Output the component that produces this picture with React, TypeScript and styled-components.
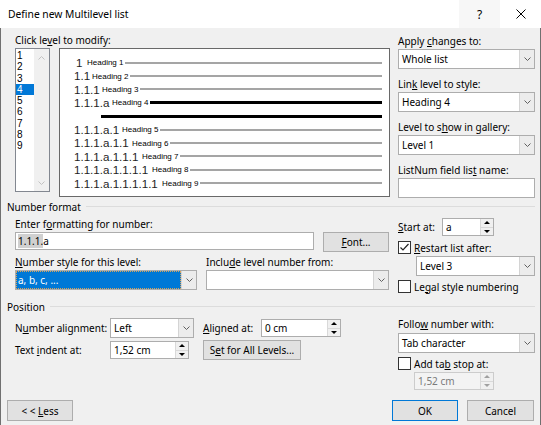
import React from 'react';
import styled, { createGlobalStyle } from 'styled-components';

const GlobalStyle = createGlobalStyle`
  html, body {
    margin: 0;
    padding: 0;
    background: #f0f0f0;
  }
  body {
    font-family: "Segoe UI", "Noto Sans", sans-serif;
    font-size: 10px;
    color: #000;
  }
  * {
    box-sizing: border-box;
  }
`;

const Window = styled('div')`
  width: 541px;
  height: 425px;
  display: flex;
  flex-direction: column;
  overflow: hidden;
  background: #f0f0f0;
`;

const TitleBar = styled('div')`
  flex: none;
  height: 28px;
  display: flex;
  align-items: center;
  padding-left: 8px;
  background: #fff;
  font-size: 10.3px;
`;

const Title = styled('div')`
  flex: 1;
`;

const TitleButton = styled('div')<{ $hover?: boolean }>`
  width: 41px;
  height: 28px;
  display: flex;
  align-items: center;
  justify-content: center;
  background: ${p => (p.$hover ? '#f7f7f7' : '#fff')};
  font-size: 12px;
`;

const Body = styled('div')`
  flex: 1;
  display: flex;
  flex-direction: column;
  padding: 5px 5px 0 6px;
  border-left: 1px solid #707070;
  border-right: 1px solid #707070;
`;

const Section = styled('div')`
  display: grid;
  grid-template-columns: 383px 137px;
  column-gap: 8px;
`;

const LeftArea = styled('div')`
  padding-left: 8px;
  display: flex;
  flex-direction: column;
`;

const RightColumn = styled('div')`
  display: flex;
  flex-direction: column;
`;

const Label = styled('div')<{ $top?: number; $h?: number }>`
  height: ${p => p.$h ?? 16}px;
  line-height: ${p => p.$h ?? 16}px;
  white-space: nowrap;
  margin-top: ${p => p.$top ?? 0}px;
`;

const LevelRow = styled('div')`
  display: flex;
  align-items: flex-start;
`;

const ListBox = styled('div')`
  width: 35px;
  height: 144px;
  display: flex;
  background: #fff;
  border: 1px solid #828790;
`;

const ListItems = styled('div')`
  flex: 1;
  padding-top: 1px;
`;

const ListItem = styled('div')<{ $selected?: boolean }>`
  height: 11.3px;
  line-height: 11.3px;
  padding-left: 1px;
  font-family: "Liberation Sans", Arial, sans-serif;
  font-size: 10px;
  background: ${p => (p.$selected ? '#0078d7' : 'transparent')};
  color: ${p => (p.$selected ? '#fff' : '#000')};
`;

const ScrollBar = styled('div')`
  width: 15px;
  display: flex;
  flex-direction: column;
  justify-content: space-between;
  align-items: center;
  padding: 7px 0 6px;
  background: #f0f0f0;
`;

const Preview = styled('div')`
  width: 331px;
  height: 149px;
  margin-left: 9px;
  padding: 7px 7px 0 14px;
  background: #fff;
  border: 1px solid #696969;
`;

const PreviewRow = styled('div')`
  height: 13.4px;
  display: flex;
  align-items: center;
  white-space: nowrap;
`;

const NumberText = styled('span')<{ $w: number; $pad?: number }>`
  display: inline-block;
  width: ${p => p.$w}px;
  padding-left: ${p => p.$pad ?? 0}px;
  font-family: "Liberation Sans", Arial, sans-serif;
  font-size: 11.6px;
  line-height: 13.4px;
  color: #1e1e1e;
`;

const HeadingText = styled('span')`
  font-family: "Liberation Sans", Arial, sans-serif;
  font-size: 8px;
`;

const PreviewLine = styled('div')<{ $active?: boolean; $indent?: number }>`
  flex: 1;
  height: ${p => (p.$active ? 3 : 2)}px;
  margin-left: ${p => p.$indent ?? 2}px;
  background: ${p => (p.$active ? '#000' : '#a5a5a5')};
`;

const ComboBox = styled('div')<{ $w?: number; $top?: number; $left?: number }>`
  display: flex;
  height: 20px;
  width: ${p => (p.$w ? `${p.$w}px` : 'auto')};
  margin-top: ${p => p.$top ?? 0}px;
  margin-left: ${p => p.$left ?? 0}px;
  background: #fff;
  border: 1px solid #adadad;
`;

const ComboText = styled('div')<{ $selected?: boolean }>`
  flex: 1;
  display: flex;
  align-items: center;
  padding-left: ${p => (p.$selected ? 1 : 3)}px;
  white-space: nowrap;
  background: ${p => (p.$selected ? '#0078d7' : 'transparent')};
  color: ${p => (p.$selected ? '#fff' : '#000')};
  border: ${p => (p.$selected ? '1px dotted #d9a35a' : 'none')};
`;

const ComboButton = styled('div')`
  width: 15px;
  display: flex;
  align-items: center;
  justify-content: center;
  background: #ececec;
  border-left: 1px solid #d4d4d4;
`;

const TextBox = styled('div')<{ $w?: number; $h?: number; $top?: number }>`
  display: flex;
  align-items: center;
  width: ${p => (p.$w ? `${p.$w}px` : 'auto')};
  height: ${p => p.$h ?? 20}px;
  margin-top: ${p => p.$top ?? 0}px;
  padding-left: 2px;
  background: #fff;
  border: 1px solid #adadad;
`;

const Shaded = styled('span')`
  background: #d0d0d0;
`;

const SpinBox = styled('div')<{ $w: number; $disabled?: boolean; $top?: number; $left?: number }>`
  display: flex;
  width: ${p => p.$w}px;
  height: 18px;
  margin-top: ${p => p.$top ?? 0}px;
  margin-left: ${p => p.$left ?? 0}px;
  background: ${p => (p.$disabled ? '#f3f3f3' : '#fff')};
  border: 1px solid ${p => (p.$disabled ? '#cccccc' : '#adadad')};
  color: ${p => (p.$disabled ? '#7a7a7a' : '#000')};
`;

const SpinText = styled('div')`
  flex: 1;
  display: flex;
  align-items: center;
  padding-left: 3px;
  white-space: nowrap;
`;

const SpinButtons = styled('div')`
  width: 13px;
  display: flex;
  flex-direction: column;
  border-left: 1px solid #d9d9d9;
  background: #f0f0f0;
`;

const SpinHalf = styled('div')<{ $down?: boolean; $disabled?: boolean }>`
  flex: 1;
  display: flex;
  align-items: center;
  justify-content: center;
  border-top: ${p => (p.$down ? '1px solid #d9d9d9' : 'none')};
  &::before {
    content: '';
    border-left: 3px solid transparent;
    border-right: 3px solid transparent;
    ${p => (p.$down ? 'border-top' : 'border-bottom')}: 3px solid ${p => (p.$disabled ? '#a0a0a0' : '#000')};
  }
`;

const Button = styled('button')<{ $w: number; $h?: number; $primary?: boolean; $left?: number }>`
  width: ${p => p.$w}px;
  height: ${p => p.$h ?? 20}px;
  margin-left: ${p => p.$left ?? 0}px;
  padding: 0;
  background: #e1e1e1;
  border: 1px solid ${p => (p.$primary ? '#0078d7' : '#adadad')};
  font: inherit;
  color: #000;
  white-space: nowrap;
`;

const Row = styled('div')<{ $top?: number; $h?: number; $align?: string }>`
  display: flex;
  align-items: ${p => p.$align ?? 'center'};
  height: ${p => (p.$h ? `${p.$h}px` : 'auto')};
  margin-top: ${p => p.$top ?? 0}px;
`;

const InlineLabel = styled('div')<{ $w: number }>`
  width: ${p => p.$w}px;
  white-space: nowrap;
`;

const CheckRow = styled('div')<{ $top?: number }>`
  display: flex;
  align-items: center;
  height: 13px;
  margin-top: ${p => p.$top ?? 0}px;
  white-space: nowrap;
`;

const CheckBoxBox = styled('div')`
  width: 13px;
  height: 13px;
  margin-right: 3px;
  display: flex;
  align-items: center;
  justify-content: center;
  background: #fff;
  border: 1px solid #333;
`;

const GroupHeader = styled('div')<{ $top?: number }>`
  display: flex;
  align-items: center;
  height: 16px;
  margin-top: ${p => p.$top ?? 0}px;
  white-space: nowrap;
  &::after {
    content: '';
    flex: 1;
    height: 1px;
    margin: 0 0 1px 5px;
    background: #dcdcdc;
  }
`;

const StyleGrid = styled('div')`
  display: grid;
  grid-template-columns: 182px 183px;
  column-gap: 9px;
  margin-top: 2px;
`;

const PositionGrid = styled('div')`
  display: grid;
  grid-template-columns: 95px 84px 9px 58px 80px;
  grid-template-rows: 20px 20px;
  row-gap: 2px;
  margin-top: 3px;
  align-items: center;
`;

const SetAllButton = styled(Button)`
  grid-column: 4 / span 2;
`;

const Footer = styled('div')`
  display: flex;
  justify-content: space-between;
  margin-top: 10px;
  padding-right: 1px;
`;

const Chevron = ({ up, color = '#606060' }: { up?: boolean; color?: string }) => (
  <svg width="7" height="4" viewBox="0 0 7 4">
    <polyline
      points={up ? '0.5,3.5 3.5,0.5 6.5,3.5' : '0.5,0.5 3.5,3.5 6.5,0.5'}
      fill="none"
      stroke={color}
      strokeWidth="1"
    />
  </svg>
);

const Combo = ({ text, w, top, left, selected }: { text: React.ReactNode; w?: number; top?: number; left?: number; selected?: boolean }) => (
  <ComboBox $w={w} $top={top} $left={left}>
    <ComboText $selected={selected}>{text}</ComboText>
    <ComboButton>
      <Chevron />
    </ComboButton>
  </ComboBox>
);

const Spin = ({ text, w, disabled, top, left }: { text: string; w: number; disabled?: boolean; top?: number; left?: number }) => (
  <SpinBox $w={w} $disabled={disabled} $top={top} $left={left}>
    <SpinText>{text}</SpinText>
    <SpinButtons>
      <SpinHalf $disabled={disabled} />
      <SpinHalf $down $disabled={disabled} />
    </SpinButtons>
  </SpinBox>
);

const CheckBox = ({ checked, children, top }: { checked?: boolean; children: React.ReactNode; top?: number }) => (
  <CheckRow $top={top}>
    <CheckBoxBox>
      {checked && (
        <svg width="11" height="11" viewBox="0 0 11 11">
          <polyline points="1.5,5.5 4,8 9.5,2" fill="none" stroke="#222" strokeWidth="1.2" />
        </svg>
      )}
    </CheckBoxBox>
    <span>{children}</span>
  </CheckRow>
);

const levels = [
  '1',
  '1.1',
  '1.1.1',
  '1.1.1.a',
  '1.1.1.a.1',
  '1.1.1.a.1.1',
  '1.1.1.a.1.1.1',
  '1.1.1.a.1.1.1.1',
  '1.1.1.a.1.1.1.1.1',
];

const selectedLevel = 4;

function PreviewPane() {
  const rows: React.ReactNode[] = [];
  levels.forEach((num, i) => {
    const level = i + 1;
    rows.push(
      <PreviewRow key={num}>
        <NumberText $w={level === 1 ? 13 : level * 10 - 2} $pad={level === 1 ? 2 : 0}>
          {num}
        </NumberText>
        <HeadingText>Heading {level}</HeadingText>
        <PreviewLine $active={level === selectedLevel} />
      </PreviewRow>
    );
    if (level === selectedLevel) {
      rows.push(
        <PreviewRow key="body">
          <PreviewLine $active $indent={27} />
        </PreviewRow>
      );
    }
  });
  return <Preview>{rows}</Preview>;
}

export default function App() {
  return (
    <Window>
      <GlobalStyle />
      <TitleBar>
        <Title>Define new Multilevel list</Title>
        <TitleButton $hover>?</TitleButton>
        <TitleButton>
          <svg width="10" height="10" viewBox="0 0 10 10">
            <path d="M0.5 0.5 L9.5 9.5 M9.5 0.5 L0.5 9.5" stroke="#000" strokeWidth="1" />
          </svg>
        </TitleButton>
      </TitleBar>
      <Body>
        <Section>
          <LeftArea>
            <Label $h={15}>Click le<u>v</u>el to modify:</Label>
            <LevelRow>
              <ListBox>
                <ListItems>
                  {levels.map((_, i) => (
                    <ListItem key={i} $selected={i + 1 === selectedLevel}>
                      {i + 1}
                    </ListItem>
                  ))}
                </ListItems>
                <ScrollBar>
                  <Chevron up color="#c2c2c2" />
                  <Chevron color="#c2c2c2" />
                </ScrollBar>
              </ListBox>
              <PreviewPane />
            </LevelRow>
          </LeftArea>
          <RightColumn>
            <Label>Apply <u>c</u>hanges to:</Label>
            <Combo text="Whole list" />
            <Label $top={7}>Lin<u>k</u> level to style:</Label>
            <Combo text="Heading 4" />
            <Label $top={7}>Level to s<u>h</u>ow in gallery:</Label>
            <Combo text="Level 1" />
            <Label $top={7}>ListNum field lis<u>t</u> name:</Label>
            <TextBox />
          </RightColumn>
        </Section>

        <GroupHeader $top={1}>Number format</GroupHeader>
        <Section>
          <LeftArea>
            <Label $top={1}>Enter f<u>o</u>rmatting for number:</Label>
            <Row $align="flex-start">
              <TextBox $w={299} $h={18}>
                <Shaded>1.1.1.</Shaded>a
              </TextBox>
              <Button $w={66} $left={9}>
                <u>F</u>ont...
              </Button>
            </Row>
            <StyleGrid>
              <Label><u>N</u>umber style for this level:</Label>
              <Label>Inclu<u>d</u>e level number from:</Label>
              <Combo text="a, b, c, ..." selected />
              <Combo text="" />
            </StyleGrid>
          </LeftArea>
          <RightColumn>
            <Row $top={3} $h={18}>
              <InlineLabel $w={44}><u>S</u>tart at:</InlineLabel>
              <Spin text="a" w={52} />
            </Row>
            <CheckBox checked top={5}><u>R</u>estart list after:</CheckBox>
            <Combo text="Level 3" top={2} left={18} />
            <CheckBox top={4}>Le<u>g</u>al style numbering</CheckBox>
          </RightColumn>
        </Section>

        <GroupHeader $top={6}>Position</GroupHeader>
        <Section>
          <LeftArea>
            <PositionGrid>
              <div>N<u>u</u>mber alignment:</div>
              <Combo text="Left" w={84} />
              <div />
              <div><u>A</u>ligned at:</div>
              <Spin text="0 cm" w={80} />
              <div>Text <u>i</u>ndent at:</div>
              <Spin text="1,52 cm" w={79} />
              <div />
              <SetAllButton $w={98}>
                S<u>e</u>t for All Levels...
              </SetAllButton>
            </PositionGrid>
          </LeftArea>
          <RightColumn>
            <Label $top={1}>Follo<u>w</u> number with:</Label>
            <Combo text="Tab character" top={1} />
            <CheckBox top={4}>Add ta<u>b</u> stop at:</CheckBox>
            <Spin text="1,52 cm" w={80} disabled top={2} left={16} />
          </RightColumn>
        </Section>

        <Footer>
          <Button $w={66} $h={21}>
            &lt; &lt; <u>L</u>ess
          </Button>
          <div>
            <Button $w={66} $h={21} $primary>OK</Button>
            <Button $w={67} $h={21} $left={9}>Cancel</Button>
          </div>
        </Footer>
      </Body>
    </Window>
  );
}
